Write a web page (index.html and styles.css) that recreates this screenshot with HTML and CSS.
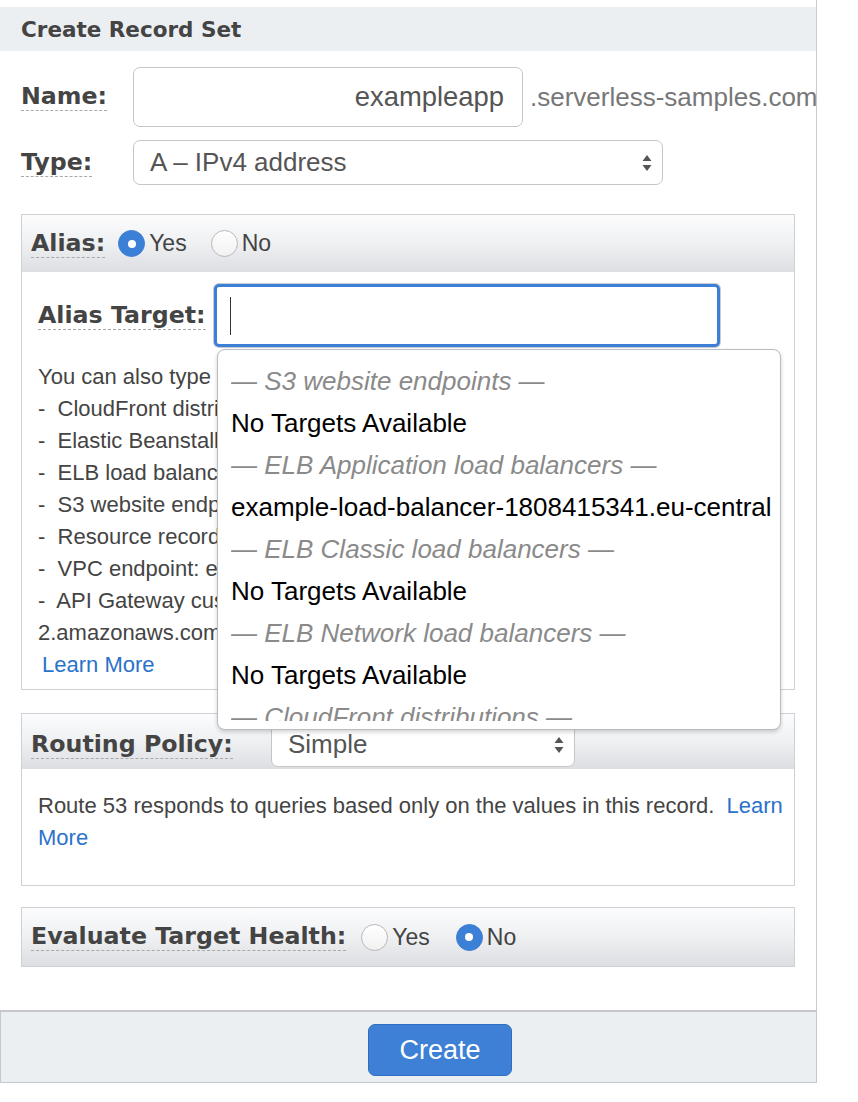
FILE: index.html
```html
<!DOCTYPE html>
<html>
<head>
<meta charset="utf-8">
<title>Create Record Set</title>
<link rel="stylesheet" href="styles.css">
</head>
<body>
<div class="page">
  <div class="form">
    <div class="title">Create Record Set</div>
    <div class="rows">
      <div class="row name-row">
        <div class="lbl-cell"><span class="lbl">Name:</span></div>
        <div class="input name-input">exampleapp</div>
        <span class="suffix">.serverless-samples.com</span>
      </div>
      <div class="row type-row">
        <div class="lbl-cell"><span class="lbl">Type:</span></div>
        <div class="select type-select">
          <span>A – IPv4 address</span>
          <svg class="arrows" width="12" height="18" viewBox="0 0 12 18"><path d="M6 1 L10.5 7 H1.5 Z M6 17 L10.5 11 H1.5 Z" fill="#555"/></svg>
        </div>
      </div>

      <section class="panel alias">
        <div class="panel-head alias-head">
          <span class="lbl">Alias:</span>
          <span class="radio on first"></span><span class="opt">Yes</span>
          <span class="radio"></span><span class="opt">No</span>
        </div>
        <div class="panel-body alias-body">
          <div class="target-row">
            <div class="target-lbl"><span class="lbl">Alias Target:</span></div>
            <div class="target-wrap">
              <div class="target-input"><span class="caret"></span></div>
              <div class="menu">
                <div class="menu-list">
                  <div class="mi mh">— S3 website endpoints —</div>
                  <div class="mi">No Targets Available</div>
                  <div class="mi mh">— ELB Application load balancers —</div>
                  <div class="mi">example-load-balancer-1808415341.eu-central-1.elb.amazonaws.com</div>
                  <div class="mi mh">— ELB Classic load balancers —</div>
                  <div class="mi">No Targets Available</div>
                  <div class="mi mh">— ELB Network load balancers —</div>
                  <div class="mi">No Targets Available</div>
                  <div class="mi mh">— CloudFront distributions —</div>
                  <div class="mi">No Targets Available</div>
                </div>
              </div>
            </div>
          </div>
          <div class="desc">
            <div class="line">You can also type the domain name for the resource. Examples:</div>
            <div class="line">-  CloudFront distribution domain name: d111111abcdef8.cloudfront.net</div>
            <div class="line">-  Elastic Beanstalk environment CNAME: example.elasticbeanstalk.com</div>
            <div class="line">-  ELB load balancer DNS name: example-1.us-east-2.elb.amazonaws.com</div>
            <div class="line">-  S3 website endpoint: s3-website.us-east-2.amazonaws.com</div>
            <div class="line">-  Resource record set in this hosted zone: www.example.com</div>
            <div class="line">-  VPC endpoint: example.us-east-2.vpce.amazonaws.com</div>
            <div class="line">-  API Gateway custom regional API: d-abcde12345.execute-api.us-west-</div>
            <div class="line">2.amazonaws.com</div>
            <div class="line"><a class="link learn" href="#">Learn More</a></div>
          </div>
        </div>
      </section>

      <section class="panel routing">
        <div class="panel-head routing-head">
          <div class="rp-cell"><span class="lbl">Routing Policy:</span></div>
          <div class="select routing-select">
            <span>Simple</span>
            <svg class="arrows" width="12" height="18" viewBox="0 0 12 18"><path d="M6 1 L10.5 7 H1.5 Z M6 17 L10.5 11 H1.5 Z" fill="#555"/></svg>
          </div>
        </div>
        <div class="panel-body routing-body">
          <p class="note">Route 53 responds to queries based only on the values in this record.&nbsp; <a class="link" href="#">Learn More</a></p>
        </div>
      </section>

      <section class="panel health">
        <div class="panel-head health-head">
          <span class="lbl">Evaluate Target Health:</span>
          <span class="radio first-h"></span><span class="opt">Yes</span>
          <span class="radio on"></span><span class="opt">No</span>
        </div>
      </section>
    </div>
  </div>
  <div class="footer">
    <button class="create" type="button">Create</button>
  </div>
</div>
</body>
</html>
```

FILE: styles.css
```css
body {
  margin: 0;
  background: #fff;
  font-family: "Liberation Sans", Arial, Helvetica, sans-serif;
  color: #444;
}

.page {
  width: 817px;
}

.form {
  width: 816px;
  border-right: 1px solid #c9cbce;
  padding-top: 7px;
  padding-bottom: 43px;
}

.title {
  height: 44px;
  background: #eceff2;
  padding-left: 21px;
  display: flex;
  align-items: center;
  font-family: "DejaVu Sans", Verdana, sans-serif;
  font-weight: bold;
  font-size: 21.5px;
  color: #444;
}

.rows {
  padding: 0 21px;
}

.row {
  display: flex;
  align-items: center;
}

.lbl-cell {
  width: 112px;
  flex: none;
}

.lbl {
  display: inline-block;
  font-family: "DejaVu Sans", Verdana, sans-serif;
  font-weight: bold;
  font-size: 23.7px;
  line-height: 27px;
  color: #444;
  border-bottom: 1px dashed #a9a9a9;
  white-space: nowrap;
}

.name-row {
  margin-top: 16px;
  height: 60px;
}

.input {
  flex: none;
  box-sizing: border-box;
  width: 390px;
  height: 60px;
  border: 1px solid #c6c6c6;
  border-radius: 7px;
  display: flex;
  align-items: center;
  justify-content: flex-end;
  padding-right: 18px;
  font-size: 27.4px;
  color: #555;
}

.suffix {
  margin-left: 7px;
  font-size: 26px;
  color: #777;
  white-space: nowrap;
}

.type-row {
  margin-top: 13px;
  height: 45px;
}

.select {
  flex: none;
  box-sizing: border-box;
  height: 45px;
  border: 1px solid #c6c6c6;
  border-radius: 7px;
  background: #fff;
  display: flex;
  align-items: center;
  justify-content: space-between;
  padding: 0 9px 0 16px;
  font-size: 26px;
  color: #555;
}

.type-select {
  width: 530px;
}

.arrows {
  display: block;
}

.panel {
  border: 1px solid #cdd0d4;
}

.panel-head {
  display: flex;
  align-items: center;
  padding-left: 9px;
  background: linear-gradient(#fcfcfd, #eef0f2 50%, #dcdee2);
}

.alias {
  margin-top: 29px;
}

.alias-head {
  height: 57px;
}

.radio {
  box-sizing: border-box;
  width: 27px;
  height: 27px;
  border-radius: 50%;
  border: 1px solid #b8b8b8;
  background: linear-gradient(#ffffff, #f1f1f1);
  margin-left: 24px;
  flex: none;
  display: flex;
  align-items: center;
  justify-content: center;
}

.radio.first {
  margin-left: 13px;
}

.radio.first-h {
  margin-left: 15px;
}

.health-head .radio.on {
  margin-left: 26px;
}

.radio.on {
  background: #3b7fd6;
  border-color: #3b7fd6;
}

.radio.on::after {
  content: "";
  width: 8px;
  height: 8px;
  border-radius: 50%;
  background: #fff;
}

.opt {
  margin-left: 4px;
  font-size: 23px;
  color: #444;
}

.alias-body {
  padding: 12px 8px 8px 16px;
}

.target-row {
  display: flex;
  align-items: center;
}

.target-lbl {
  width: 176px;
  flex: none;
}

.target-wrap {
  position: relative;
  width: 506px;
  height: 63px;
}

.target-input {
  box-sizing: border-box;
  width: 506px;
  height: 63px;
  border: 3px solid #3d7fd7;
  border-radius: 5px;
  box-shadow: 0 0 0 1px #c8ccd2;
  background: #fff;
  padding-left: 13px;
  display: flex;
  align-items: center;
}

.caret {
  width: 1px;
  height: 38px;
  background: #333;
}

.menu {
  position: absolute;
  top: 65px;
  left: 3px;
  z-index: 10;
  box-sizing: border-box;
  width: 564px;
  height: 381px;
  border: 1px solid #b9bcc1;
  border-radius: 8px;
  background: #fff;
  box-shadow: 0 2px 4px rgba(0, 0, 0, 0.18);
  padding: 10px 9px 0 13px;
}

.menu-list {
  height: 361px;
  overflow: hidden;
}

.mi {
  font-size: 26px;
  line-height: 42px;
  color: #000;
  white-space: nowrap;
}

.mh {
  font-style: italic;
  color: #8a8a8a;
}

.desc {
  margin-top: 14px;
  width: 740px;
  font-size: 22px;
  line-height: 32px;
  color: #444;
}

.line {
  white-space: pre;
  overflow: hidden;
}

.link {
  color: #2b72c9;
  text-decoration: none;
}

.learn {
  margin-left: 4px;
}

.routing {
  margin-top: 23px;
}

.routing-head {
  box-sizing: border-box;
  height: 55px;
  padding-top: 6px;
}

.rp-cell {
  width: 240px;
  flex: none;
}

.routing-select {
  width: 304px;
}

.routing-body {
  padding: 21px 8px 31px 16px;
}

.note {
  margin: 0;
  font-size: 22px;
  line-height: 32px;
  color: #444;
}

.health {
  margin-top: 21px;
}

.health-head {
  height: 58px;
}

.footer {
  box-sizing: border-box;
  width: 817px;
  height: 73px;
  background: #eceff2;
  border: 1px solid #c4c7cb;
  border-top-width: 2px;
  padding-top: 12px;
}

.create {
  margin-left: 367px;
  width: 144px;
  height: 52px;
  border: 1px solid #2f6dbf;
  border-radius: 7px;
  background: #3d80d6;
  color: #fff;
  font-family: "Liberation Sans", Arial, sans-serif;
  font-size: 27px;
  padding: 0;
}
```
